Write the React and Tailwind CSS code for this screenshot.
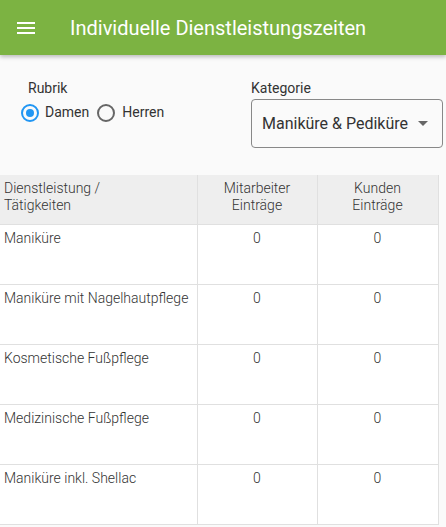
import React from "react";

const rows = [
  "Maniküre",
  "Maniküre mit Nagelhautpflege",
  "Kosmetische Fußpflege",
  "Medizinische Fußpflege",
  "Maniküre inkl. Shellac",
];

export default function App() {
  return (
    <div className="w-[446px] h-[527px] overflow-hidden bg-[#fafafa] text-[#212121]" style={{ fontFamily: "Roboto, 'Noto Sans', sans-serif" }}>
      <header className="h-[55px] bg-[#7cb342] flex items-center shadow-[0_2px_4px_rgba(0,0,0,0.25)] relative z-10">
        <div className="w-[70px] flex justify-start pl-[17px]">
          <svg width="18" height="12" viewBox="0 0 18 12" fill="#fff">
            <rect x="0" y="0" width="18" height="2" />
            <rect x="0" y="5" width="18" height="2" />
            <rect x="0" y="10" width="18" height="2" />
          </svg>
        </div>
        <h1 className="text-white text-[20px] font-normal leading-none">Individuelle Dienstleistungszeiten</h1>
      </header>

      <div className="flex pt-[25px] h-[120px]">
        <div className="pl-[21px] w-[251px]">
          <div className="pl-[7px] text-[14px] leading-[16px] text-[#333]">Rubrik</div>
          <div className="flex items-center mt-[6px] text-[14px] text-[#333]">
            <span className="w-[18px] h-[18px] rounded-full border-2 border-[#2196f3] flex items-center justify-center">
              <span className="w-[8px] h-[8px] rounded-full bg-[#2196f3]" />
            </span>
            <span className="ml-[6px]">Damen</span>
            <span className="ml-[8px] w-[18px] h-[18px] rounded-full border-2 border-[#666]" />
            <span className="ml-[7px]">Herren</span>
          </div>
        </div>
        <div>
          <div className="text-[14px] leading-[16px] text-[#333]">Kategorie</div>
          <div className="mt-[3px] w-[192px] h-[49px] border border-[#888] rounded-[4px] flex items-center pl-[10px] pr-[14px] justify-between">
            <span className="text-[16px] text-[#333]">Maniküre &amp; Pediküre</span>
            <svg width="10" height="5" viewBox="0 0 10 5"><path d="M0 0L5 5L10 0Z" fill="#666" /></svg>
          </div>
        </div>
      </div>

      <table className="w-[438px] border-collapse text-[14px] text-[#333] font-light border-r border-b border-[#e0e0e0]" style={{ tableLayout: "fixed" }}>
        <colgroup>
          <col style={{ width: 197 }} />
          <col style={{ width: 120 }} />
          <col style={{ width: 121 }} />
        </colgroup>
        <thead>
          <tr className="h-[49px] bg-[#eeeeee]">
            <th className="font-light text-left align-top pt-[5px] px-[4px] leading-[17px] border-r border-[#e0e0e0]">Dienstleistung /<br />Tätigkeiten</th>
            <th className="font-light text-center align-top pt-[5px] leading-[17px] border-r border-[#e0e0e0]">Mitarbeiter<br />Einträge</th>
            <th className="font-light text-center align-top pt-[5px] leading-[17px]">Kunden<br />Einträge</th>
          </tr>
        </thead>
        <tbody className="bg-white">
          {rows.map((r) => (
            <tr key={r} className="h-[60px] border-t border-[#e0e0e0]">
              <td className="align-top pt-[5px] px-[4px] leading-[16px] border-r border-[#e0e0e0] whitespace-nowrap">{r}</td>
              <td className="align-top pt-[5px] text-center leading-[16px] border-r border-[#e0e0e0]">0</td>
              <td className="align-top pt-[5px] text-center leading-[16px]">0</td>
            </tr>
          ))}
        </tbody>
      </table>
    </div>
  );
}
